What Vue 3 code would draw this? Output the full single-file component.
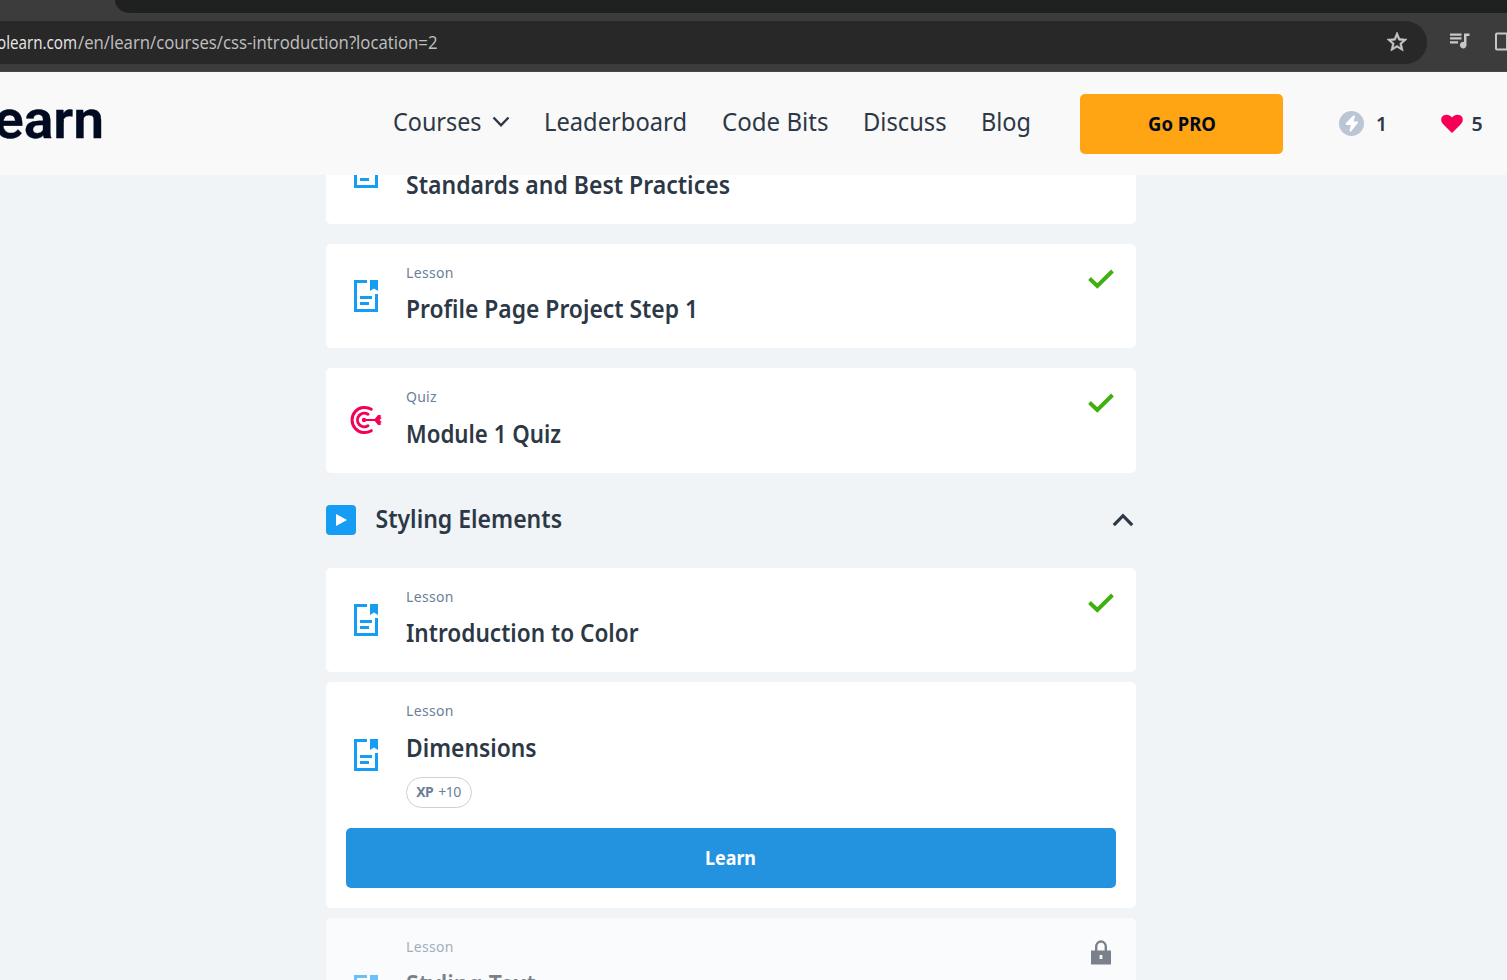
<script setup>
const nav = [
  { text: 'Courses', w: 88.5, menu: true },
  { text: 'Leaderboard', w: 143 },
  { text: 'Code Bits', w: 106.5 },
  { text: 'Discuss', w: 83.5 },
  { text: 'Blog', w: 50 }
]
const modules = [
  {
    items: [
      { kind: 'Lesson', title: 'Standards and Best Practices', w: 324, base: 24, cls: 'first' },
      { kind: 'Lesson', title: 'Profile Page Project Step 1', w: 292, base: 24, done: true, cls: 'plain' },
      { kind: 'Quiz', title: 'Module 1 Quiz', w: 155, base: 25, done: true, cls: 'tall' }
    ]
  },
  {
    heading: 'Styling Elements',
    items: [
      { kind: 'Lesson', title: 'Introduction to Color', w: 232.5, base: 24, done: true, cls: 'tight' },
      { kind: 'Lesson', title: 'Dimensions', w: 130.5, base: 25, xp: 10, learn: true, cls: 'tight' },
      { kind: 'Lesson', title: 'Styling Text', w: 129.5, base: 25, xp: 10, locked: true, cls: 'tight locked' }
    ]
  }
]
</script>

<template>
  <div class="page">
    <div class="tabs"><div class="tab-strip"></div></div>
    <div class="toolbar">
      <div class="omnibox">
        <div class="url">
          <svg width="439" height="43">
            <text class="host" x="-3" y="28" textLength="80" lengthAdjust="spacingAndGlyphs">olearn.com</text>
            <text class="path" x="78" y="28" textLength="359.500" lengthAdjust="spacingAndGlyphs">/en/learn/courses/css-introduction?location=2</text>
          </svg>
        </div>
        <svg class="star" width="24" height="24" viewBox="0 0 24 24"><path fill="#c7c7c7" stroke="#c7c7c7" stroke-width="0.600" d="M22 9.240l-7.190-.62L12 2 9.190 8.630 2 9.240l5.460 4.730L5.820 21 12 17.270 18.180 21l-1.630-7.030L22 9.240zM12 15.400l-3.760 2.270 1-4.280-3.320-2.880 4.380-.38L12 6.100l1.710 4.040 4.380.38-3.320 2.880 1 4.280L12 15.400z" /></svg>
      </div>
      <svg class="media" width="20" height="16" viewBox="0 0 20 16"><g fill="#c7c7c7"><path d="M0 0.500h11.500v2.200H0zM0 4.300h11.500v2.200H0zM0 8.200h8v2.200H0z" /><path d="M14 0.500h5.500v2.400H16.500V12a3.300 3.300 0 1 1-2.500-3.100z" /></g></svg>
      <svg class="side" width="20" height="20" viewBox="0 0 20 20"><rect x="1" y="1.500" width="18" height="16" rx="1" fill="none" stroke="#c7c7c7" stroke-width="2" /><path d="M11 2h8v15h-8z" fill="#c7c7c7" /></svg>
    </div>

    <header class="site">
      <svg class="logo" width="106" height="50"><text x="-6" y="39" textLength="110" lengthAdjust="spacingAndGlyphs">earn</text></svg>
      <nav class="nav">
        <div v-for="n in nav" :key="n.text" class="nav-item">
          <svg :width="n.w" height="40"><text y="27" :textLength="n.w" lengthAdjust="spacingAndGlyphs">{{ n.text }}</text></svg>
          <svg v-if="n.menu" class="caret" width="18" height="12" viewBox="0 0 18 12"><path d="M1.500 1.500L9 9.300l7.500-7.800" fill="none" stroke="#2d3846" stroke-width="2.400" /></svg>
        </div>
      </nav>
      <button class="pro"><svg width="68" height="30"><text y="22" textLength="68" lengthAdjust="spacingAndGlyphs">Go PRO</text></svg></button>
      <div class="stat xp-stat">
        <svg width="25" height="25" viewBox="0 0 25 25"><circle cx="12.500" cy="12.500" r="12.500" fill="#bac5d6" /><path d="M13.800 5Q15 4.200 16.200 5L14.500 10.500H18.500Q19.500 11 18.800 12L12 20.500Q10.500 21 10.500 19.500L11.800 14H7.500Q6.300 13.300 7 12z" fill="#fff" /></svg>
        <span>1</span>
      </div>
      <div class="stat heart-stat">
        <svg width="22" height="20" viewBox="0 0 22 20"><path d="M11 19L2 10C-1 6.500 0 2.500 3 1.200 6 0 9 1 11 3.500 13 1 16 0 19 1.200c3 1.300 4 5.300 1 8.800z" fill="#f60057" /></svg>
        <span>5</span>
      </div>
    </header>

    <main class="content">
      <div class="column">
        <template v-for="(m, i) in modules" :key="i">
          <div v-if="m.heading" class="module">
            <svg class="play" width="30" height="30" viewBox="0 0 30 30"><rect width="30" height="30" rx="4" fill="#149df2" /><path d="M10 9l11 6-11 6z" fill="#fff" /></svg>
            <svg class="title" width="188" height="32"><text x="0.500" y="24" textLength="186.500" lengthAdjust="spacingAndGlyphs">{{ m.heading }}</text></svg>
            <svg class="up" width="22" height="14" viewBox="0 0 22 14"><path d="M1.800 12.200L11 2.700l9.200 9.500" fill="none" stroke="#2d3846" stroke-width="3.200" /></svg>
          </div>
          <article v-for="c in m.items" :key="c.title" class="card" :class="c.cls">
            <div class="row">
              <div class="icon">
                <svg v-if="c.kind === 'Quiz'" width="32" height="30" viewBox="0 0 32 30"><g fill="none" stroke="#f60057" stroke-linecap="round"><path d="M21.300 4.300A12.600 12.600 0 1 0 21.300 25.700" stroke-width="3" /><path d="M18 9.300A6.800 6.800 0 1 0 18 20.700" stroke-width="2.900" /><path d="M14 15h13" stroke-width="2.200" /></g><circle cx="14" cy="15" r="2.200" fill="#f60057" /><path d="M24 15l4-5h2.700v2.700h1.300L29.500 15l2.500 2.300h-1.300V20H28z" fill="#f60057" /></svg>
                <svg v-else width="24" height="32" viewBox="0 0 24 32"><g fill="#149df2"><path d="M0 0h13v3H3v26h18V14h3v18H0z" /><path d="M16 0h8v11l-4-2.500-4 2.500z" /><path d="M6 16h12v3H6zM6 22h9v3H6z" /></g></svg>
              </div>
              <div class="info">
                <svg class="kind" width="60" height="20"><text y="14" :textLength="c.kind === 'Quiz' ? 30.500 : 47.500" lengthAdjust="spacing">{{ c.kind }}</text></svg>
                <svg class="title" :width="c.w" height="35"><text :y="c.base + 1" :textLength="c.w" lengthAdjust="spacingAndGlyphs">{{ c.title }}</text></svg>
                <div v-if="c.xp" class="badge"><b>XP</b><span>+{{ c.xp }}</span></div>
              </div>
              <svg v-if="c.done" class="check" width="26" height="20" viewBox="0 0 26 20"><path d="M1.500 9.500l7.800 7.500L24.500 2" fill="none" stroke="#3fb00d" stroke-width="3.900" /></svg>
              <svg v-if="c.locked" class="lock" width="20" height="25" viewBox="0 0 20 25"><path d="M5.200 11V6.500a4.800 5 0 0 1 9.600 0V11" fill="none" stroke="#2d3846" stroke-width="2.400" /><path d="M0 10.500h20v14H0zM8.600 15v4h2.800v-4z" fill-rule="evenodd" fill="#2d3846" /></svg>
            </div>
            <button v-if="c.learn" class="learn"><svg width="52" height="30"><text y="22" textLength="51" lengthAdjust="spacingAndGlyphs">Learn</text></svg></button>
          </article>
        </template>
      </div>
    </main>
  </div>
</template>

<style>
body { overflow: hidden; }
</style>

<style scoped>
.page { width: 1507px; height: 980px; overflow: hidden; display: flex; flex-direction: column; background: #f0f4f7; font-family: "Noto Sans", "Open Sans", sans-serif; color: #2d3846; }
svg { display: block; flex: none; overflow: visible; }
.tabs { height: 13px; flex: none; background: #3c3c3c; padding-left: 115px; }
.tab-strip { height: 13px; background: #1f2121; border-bottom-left-radius: 15px 13px; }
.toolbar { height: 59px; flex: none; box-sizing: border-box; background: #3c3c3c; border-bottom: 1px solid #484848; display: flex; align-items: flex-start; padding-top: 8px; }
.omnibox { width: 1427px; height: 43px; flex: none; background: #282828; border-radius: 0 22px 22px 0; display: flex; align-items: center; justify-content: space-between; overflow: hidden; }
.url text { font: 400 18.500px "Open Sans", "Noto Sans", sans-serif; }
.host { fill: #e8e8e8; }
.path { fill: #c0c0c0; }
.star { margin: -1px 18.500px 0 0; }
.media { margin: 12px 0 0 23px; }
.side { margin: 11px 0 0 25px; }
.site { height: 103px; flex: none; background: #f9f9f9; display: flex; align-items: center; position: relative; z-index: 1; }
.logo { margin-right: 286.500px; }
.logo text { font: 600 54.500px Roboto, sans-serif; fill: #000a21; stroke: #000a21; stroke-width: 0.400px; stroke-linejoin: round; }
.nav { display: flex; gap: 34.500px; width: 687.500px; flex: none; }
.nav-item { display: flex; align-items: center; }
.nav text { font-size: 24.800px; fill: #2d3846; }
.caret { margin: -3px 0 0 10.500px; }
.pro { width: 203px; height: 60px; flex: none; border: 0; border-radius: 5px; background: #ffa412; display: flex; align-items: center; justify-content: center; padding: 0; }
.pro text { font: 700 19.800px "Noto Sans", sans-serif; fill: #000a21; }
.stat { display: flex; align-items: center; font-size: 19.500px; font-weight: 600; line-height: 30px; flex: none; }
.xp-stat { margin-left: 56px; gap: 12px; width: 102px; }
.heart-stat { gap: 8.500px; }
.content { flex: 1; min-height: 0; overflow: hidden; }
.column { width: 810px; margin: -55px 0 0 326px; }
.card { background: #fff; border-radius: 5px; box-sizing: border-box; padding: 20px; height: 104px; margin-bottom: 20px; }
.tall { height: 105px; margin-bottom: 0; }
.tight { height: auto; margin-bottom: 10px; }
.row { display: flex; align-items: center; min-height: 64px; }
.icon { width: 40px; display: flex; justify-content: center; flex: none; }
.info { flex: 1; margin-left: 19.500px; }
.kind text { font-size: 14px; fill: #6b7f99; }
.title text { font-size: 24.800px; font-weight: 600; fill: #2d3846; }
.info .title { margin-top: 9px; }
.badge { display: inline-flex; align-items: center; justify-content: center; gap: 5px; width: 66px; height: 31px; box-sizing: border-box; border: 1px solid #c8d2df; border-radius: 16px; margin: 11px 0 0 0.500px; padding: 0 1px 2px 0; font-size: 14px; color: #6b7f99; vertical-align: top; letter-spacing: -0.500px; }
.check { align-self: flex-start; margin: 4.500px 2.500px 0 0; }
.lock { align-self: flex-start; margin: 2px 5px 0 0; }
.learn { width: 770px; height: 60px; border: 0; border-radius: 5px; background: #2493df; display: flex; align-items: center; justify-content: center; margin-top: 20px; padding: 0; }
.learn text { font: 700 19.800px "Noto Sans", sans-serif; fill: #fff; }
.module { height: 95px; box-sizing: border-box; padding-bottom: 2px; display: flex; align-items: center; }
.module .title { margin-left: 19px; }
.up { margin: 0 2px 0 auto; }
.locked { background: #fafbfd; }
.locked .row { opacity: 0.620; }
</style>
